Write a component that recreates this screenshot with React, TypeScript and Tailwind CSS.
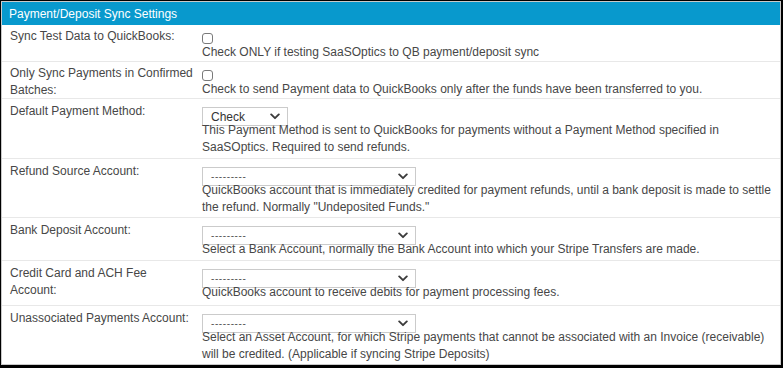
import type { ReactNode } from "react";

const FONT = { fontFamily: '"Liberation Sans", Arial, Helvetica, sans-serif' };

const Chevron = () => (
	<svg width="10" height="7" viewBox="0 0 10 7" className="flex-shrink-0">
		<path d="M1.2 1.4 L5 5.2 L8.8 1.4" fill="none" stroke="#3c3c3c" strokeWidth="1.9" strokeLinecap="round" strokeLinejoin="round" />
	</svg>
);

const Select = ({ value, wide }: { value: string; wide?: boolean }) => (
	<div
		className={`${wide ? "w-[214px]" : "w-[86px]"} h-[19px] flex items-center justify-between border border-[#cbcbcb] bg-white pl-[8px] pr-[7px]`}
	>
		<span className={value === "Check" ? "text-[12px] text-[#333] leading-none" : "text-[10px] text-[#555] leading-none tracking-[0.6px]"}>{value}</span>
		<Chevron />
	</div>
);

const Checkbox = () => (
	<div className="h-[14px] flex items-end">
		<span className="block w-[11px] h-[11px] rounded-[3px] border border-[#7a7a7a] bg-white" />
	</div>
);

interface RowProps {
	label: ReactNode;
	control: ReactNode;
	help: ReactNode;
	height: string;
	checkbox?: boolean;
	last?: boolean;
}

const Row = ({ label, control, help, height, checkbox, last }: RowProps) => (
	<div className={`flex ${height} ${last ? "" : "border-b border-[#e8e8e8]"}`}>
		<div className={`w-[200px] flex-shrink-0 pl-[8px] pr-[8px] ${checkbox ? "pt-[3px]" : "pt-[4px]"} leading-[17px]`}>{label}</div>
		<div className={`flex-1 flex flex-col ${checkbox ? "pt-[6px]" : "pt-[8px]"}`}>
			{control}
			<div className={`${checkbox ? "" : "mt-[-4px]"} leading-[17px] pr-2`}>{help}</div>
		</div>
	</div>
);

export default function App() {
	return (
		<div className="w-[783px] h-[368px] bg-black pt-px pl-px pr-[2px] pb-[3px]" style={FONT}>
			<div className="h-full border border-[#c9c9c9] bg-white flex flex-col text-[12px] text-[#474747]">
				<div className="h-[23px] flex-shrink-0 bg-[#0899cd] text-white pl-[7px] flex items-center leading-none">
					Payment/Deposit Sync Settings
				</div>
				<Row
					height="h-[37px]"
					checkbox
					label="Sync Test Data to QuickBooks:"
					control={<Checkbox />}
					help="Check ONLY if testing SaaSOptics to QB payment/deposit sync"
				/>
				<Row
					height="h-[37px]"
					checkbox
					label="Only Sync Payments in Confirmed Batches:"
					control={<Checkbox />}
					help="Check to send Payment data to QuickBooks only after the funds have been transferred to you."
				/>
				<Row
					height="h-[60px]"
					label="Default Payment Method:"
					control={<Select value="Check" />}
					help="This Payment Method is sent to QuickBooks for payments without a Payment Method specified in SaaSOptics. Required to send refunds."
				/>
				<Row
					height="h-[59px]"
					label="Refund Source Account:"
					control={<Select value="---------" wide />}
					help={'QuickBooks account that is immediately credited for payment refunds, until a bank deposit is made to settle the refund. Normally "Undeposited Funds."'}
				/>
				<Row
					height="h-[43px]"
					label="Bank Deposit Account:"
					control={<Select value="---------" wide />}
					help="Select a Bank Account, normally the Bank Account into which your Stripe Transfers are made."
				/>
				<Row
					height="h-[45px]"
					label="Credit Card and ACH Fee Account:"
					control={<Select value="---------" wide />}
					help="QuickBooks account to receive debits for payment processing fees."
				/>
				<Row
					height="flex-1"
					last
					label="Unassociated Payments Account:"
					control={<Select value="---------" wide />}
					help="Select an Asset Account, for which Stripe payments that cannot be associated with an Invoice (receivable) will be credited. (Applicable if syncing Stripe Deposits)"
				/>
			</div>
		</div>
	);
}
